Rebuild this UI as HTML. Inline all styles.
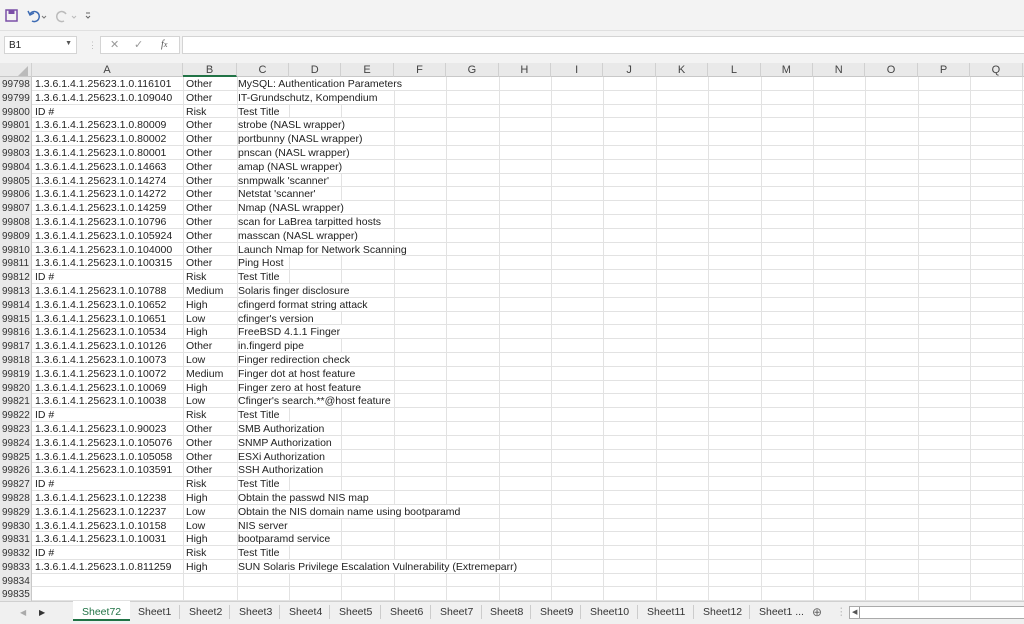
<!DOCTYPE html>
<html><head><meta charset="utf-8"><style>
*{margin:0;padding:0;box-sizing:border-box}
body{width:1024px;height:624px;overflow:hidden;background:#fff;font-family:"Liberation Sans",Arial,sans-serif;position:relative;color:#222}
.tb{position:absolute;left:0;top:0;width:1024px;height:31px;background:#f3f3f3;border-bottom:1px solid #e0e0e0}
.fb{position:absolute;left:0;top:31px;width:1024px;height:32px;background:#f3f3f3}
.nb{position:absolute;left:4px;top:36px;width:73px;height:18px;background:#fff;border:1px solid #d4d4d4;font-size:10px;padding:3px 4px}
.fx{position:absolute;left:100px;top:36px;width:80px;height:18px;background:#fff;border:1px solid #d4d4d4;color:#999;font-size:11px}
.fi{position:absolute;left:182px;top:36px;width:842px;height:18px;background:#fff;border:1px solid #d4d4d4;border-right:none}
.hdr{position:absolute;left:0;top:63px;width:1024px;height:14px;background:#e9e9e9;border-bottom:1px solid #c8c8c8}
.ch{position:absolute;top:0;height:14px;font-size:11px;text-align:center;line-height:14px;color:#444;border-right:1px solid #d0d0d0}
.grid{position:absolute;left:0;top:77px;width:1024px;z-index:2}
.r{height:13.8px;border-bottom:1px solid #e2e2e2;position:relative;font-size:10.5px;line-height:14px;white-space:nowrap}
.r span{position:absolute;top:0;background:#fff;height:12.8px;padding-right:2px}
.r span.n{left:0;width:32px;background:#e9e9e9;height:13.8px;color:#333;font-size:10px;line-height:15px;padding-left:2px;border-right:1px solid #c8c8c8}
.a{left:35px}.b{left:186px}.c{left:238px}
.vl{position:absolute;top:77px;height:525px;width:1px;background:#e2e2e2;z-index:1}
.tabs{position:absolute;left:0;top:601px;width:1024px;height:23px;background:#f0f0f0;border-top:1px solid #d0d0d0;font-size:10.5px;z-index:3}
.tabs span{position:absolute;top:4px;color:#333}
.sep{position:absolute;top:3px;width:1px;height:14px;background:#ccc}
</style></head><body>
<div class="tb">
<svg width="120" height="30" style="position:absolute;left:0;top:0">
<rect x="6" y="10" width="11" height="11" fill="none" stroke="#7b4fa8" stroke-width="1.5"/><rect x="8.5" y="10" width="6" height="4" fill="#7b4fa8"/>
<path d="M30 14 a5 5 0 1 1 2 7" fill="none" stroke="#3d6bb3" stroke-width="1.5"/><path d="M28 11 l2 4 4 -2" fill="none" stroke="#3d6bb3" stroke-width="1.5"/>
<path d="M42 16 l2 2 2-2" fill="none" stroke="#777"/>
<path d="M66 14 a5 5 0 1 0 -2 7" fill="none" stroke="#bbb" stroke-width="1.5"/>
<path d="M72 16 l2 2 2-2" fill="none" stroke="#bbb"/>
<path d="M86 13 h4 M86 16 l2 2 2-2" stroke="#666" fill="none"/>
</svg></div>
<div class="fb"></div>
<div class="nb">B1<span style="position:absolute;right:4px;top:3px;font-size:7px;color:#555">▼</span></div>
<div style="position:absolute;left:88px;top:40px;color:#bbb;font-size:9px">⋮</div>
<div class="fx"><span style="position:absolute;left:9px;top:1px">✕</span><span style="position:absolute;left:33px;top:1px">✓</span><span style="position:absolute;left:60px;top:2px;font-style:italic;font-family:'Liberation Serif',serif;color:#555;font-size:10px">f<small>x</small></span></div>
<div class="fi"></div>
<div class="hdr">
<div class="ch" style="left:0;width:32px"><svg width="10" height="10" style="position:absolute;left:18px;top:3px"><path d="M10 0 V10 H0z" fill="#bbb"/></svg></div>
<div class="ch" style="left:32px;width:151px">A</div>
<div class="ch" style="left:183px;width:54px;border-bottom:2px solid #217346">B</div>
<div class="ch" style="left:237px;width:52px">C</div>
<div class="ch" style="left:289px;width:52.4px">D</div>
<div class="ch" style="left:341.4px;width:52.4px">E</div>
<div class="ch" style="left:393.8px;width:52.4px">F</div>
<div class="ch" style="left:446.2px;width:52.4px">G</div>
<div class="ch" style="left:498.6px;width:52.4px">H</div>
<div class="ch" style="left:551px;width:52.4px">I</div>
<div class="ch" style="left:603.4px;width:52.4px">J</div>
<div class="ch" style="left:655.8px;width:52.4px">K</div>
<div class="ch" style="left:708.2px;width:52.4px">L</div>
<div class="ch" style="left:760.6px;width:52.4px">M</div>
<div class="ch" style="left:813px;width:52.4px">N</div>
<div class="ch" style="left:865.4px;width:52.4px">O</div>
<div class="ch" style="left:917.8px;width:52.4px">P</div>
<div class="ch" style="left:970.2px;width:52.4px">Q</div>
</div>
<div class="vl" style="left:183px"></div><div class="vl" style="left:237px"></div><div class="vl" style="left:289px"></div><div class="vl" style="left:341px"></div><div class="vl" style="left:394px"></div><div class="vl" style="left:446px"></div><div class="vl" style="left:499px"></div><div class="vl" style="left:551px"></div><div class="vl" style="left:603px"></div><div class="vl" style="left:656px"></div><div class="vl" style="left:708px"></div><div class="vl" style="left:761px"></div><div class="vl" style="left:813px"></div><div class="vl" style="left:865px"></div><div class="vl" style="left:918px"></div><div class="vl" style="left:970px"></div><div class="vl" style="left:1022px"></div>
<div class="grid">
<div class="r"><span class="n">99798</span><span class="a">1.3.6.1.4.1.25623.1.0.116101</span><span class="b">Other</span><span class="c">MySQL: Authentication Parameters</span></div>
<div class="r"><span class="n">99799</span><span class="a">1.3.6.1.4.1.25623.1.0.109040</span><span class="b">Other</span><span class="c">IT-Grundschutz, Kompendium</span></div>
<div class="r"><span class="n">99800</span><span class="a">ID #</span><span class="b">Risk</span><span class="c">Test Title</span></div>
<div class="r"><span class="n">99801</span><span class="a">1.3.6.1.4.1.25623.1.0.80009</span><span class="b">Other</span><span class="c">strobe (NASL wrapper)</span></div>
<div class="r"><span class="n">99802</span><span class="a">1.3.6.1.4.1.25623.1.0.80002</span><span class="b">Other</span><span class="c">portbunny (NASL wrapper)</span></div>
<div class="r"><span class="n">99803</span><span class="a">1.3.6.1.4.1.25623.1.0.80001</span><span class="b">Other</span><span class="c">pnscan (NASL wrapper)</span></div>
<div class="r"><span class="n">99804</span><span class="a">1.3.6.1.4.1.25623.1.0.14663</span><span class="b">Other</span><span class="c">amap (NASL wrapper)</span></div>
<div class="r"><span class="n">99805</span><span class="a">1.3.6.1.4.1.25623.1.0.14274</span><span class="b">Other</span><span class="c">snmpwalk 'scanner'</span></div>
<div class="r"><span class="n">99806</span><span class="a">1.3.6.1.4.1.25623.1.0.14272</span><span class="b">Other</span><span class="c">Netstat 'scanner'</span></div>
<div class="r"><span class="n">99807</span><span class="a">1.3.6.1.4.1.25623.1.0.14259</span><span class="b">Other</span><span class="c">Nmap (NASL wrapper)</span></div>
<div class="r"><span class="n">99808</span><span class="a">1.3.6.1.4.1.25623.1.0.10796</span><span class="b">Other</span><span class="c">scan for LaBrea tarpitted hosts</span></div>
<div class="r"><span class="n">99809</span><span class="a">1.3.6.1.4.1.25623.1.0.105924</span><span class="b">Other</span><span class="c">masscan (NASL wrapper)</span></div>
<div class="r"><span class="n">99810</span><span class="a">1.3.6.1.4.1.25623.1.0.104000</span><span class="b">Other</span><span class="c">Launch Nmap for Network Scanning</span></div>
<div class="r"><span class="n">99811</span><span class="a">1.3.6.1.4.1.25623.1.0.100315</span><span class="b">Other</span><span class="c">Ping Host</span></div>
<div class="r"><span class="n">99812</span><span class="a">ID #</span><span class="b">Risk</span><span class="c">Test Title</span></div>
<div class="r"><span class="n">99813</span><span class="a">1.3.6.1.4.1.25623.1.0.10788</span><span class="b">Medium</span><span class="c">Solaris finger disclosure</span></div>
<div class="r"><span class="n">99814</span><span class="a">1.3.6.1.4.1.25623.1.0.10652</span><span class="b">High</span><span class="c">cfingerd format string attack</span></div>
<div class="r"><span class="n">99815</span><span class="a">1.3.6.1.4.1.25623.1.0.10651</span><span class="b">Low</span><span class="c">cfinger's version</span></div>
<div class="r"><span class="n">99816</span><span class="a">1.3.6.1.4.1.25623.1.0.10534</span><span class="b">High</span><span class="c">FreeBSD 4.1.1 Finger</span></div>
<div class="r"><span class="n">99817</span><span class="a">1.3.6.1.4.1.25623.1.0.10126</span><span class="b">Other</span><span class="c">in.fingerd pipe</span></div>
<div class="r"><span class="n">99818</span><span class="a">1.3.6.1.4.1.25623.1.0.10073</span><span class="b">Low</span><span class="c">Finger redirection check</span></div>
<div class="r"><span class="n">99819</span><span class="a">1.3.6.1.4.1.25623.1.0.10072</span><span class="b">Medium</span><span class="c">Finger dot at host feature</span></div>
<div class="r"><span class="n">99820</span><span class="a">1.3.6.1.4.1.25623.1.0.10069</span><span class="b">High</span><span class="c">Finger zero at host feature</span></div>
<div class="r"><span class="n">99821</span><span class="a">1.3.6.1.4.1.25623.1.0.10038</span><span class="b">Low</span><span class="c">Cfinger's search.**@host feature</span></div>
<div class="r"><span class="n">99822</span><span class="a">ID #</span><span class="b">Risk</span><span class="c">Test Title</span></div>
<div class="r"><span class="n">99823</span><span class="a">1.3.6.1.4.1.25623.1.0.90023</span><span class="b">Other</span><span class="c">SMB Authorization</span></div>
<div class="r"><span class="n">99824</span><span class="a">1.3.6.1.4.1.25623.1.0.105076</span><span class="b">Other</span><span class="c">SNMP Authorization</span></div>
<div class="r"><span class="n">99825</span><span class="a">1.3.6.1.4.1.25623.1.0.105058</span><span class="b">Other</span><span class="c">ESXi Authorization</span></div>
<div class="r"><span class="n">99826</span><span class="a">1.3.6.1.4.1.25623.1.0.103591</span><span class="b">Other</span><span class="c">SSH Authorization</span></div>
<div class="r"><span class="n">99827</span><span class="a">ID #</span><span class="b">Risk</span><span class="c">Test Title</span></div>
<div class="r"><span class="n">99828</span><span class="a">1.3.6.1.4.1.25623.1.0.12238</span><span class="b">High</span><span class="c">Obtain the passwd NIS map</span></div>
<div class="r"><span class="n">99829</span><span class="a">1.3.6.1.4.1.25623.1.0.12237</span><span class="b">Low</span><span class="c">Obtain the NIS domain name using bootparamd</span></div>
<div class="r"><span class="n">99830</span><span class="a">1.3.6.1.4.1.25623.1.0.10158</span><span class="b">Low</span><span class="c">NIS server</span></div>
<div class="r"><span class="n">99831</span><span class="a">1.3.6.1.4.1.25623.1.0.10031</span><span class="b">High</span><span class="c">bootparamd service</span></div>
<div class="r"><span class="n">99832</span><span class="a">ID #</span><span class="b">Risk</span><span class="c">Test Title</span></div>
<div class="r"><span class="n">99833</span><span class="a">1.3.6.1.4.1.25623.1.0.811259</span><span class="b">High</span><span class="c">SUN Solaris Privilege Escalation Vulnerability (Extremeparr)</span></div>
<div class="r"><span class="n">99834</span></div>
<div class="r"><span class="n">99835</span></div>
</div>
<div class="tabs">
<span style="left:20px;color:#aaa;font-size:8px;top:6px">◀</span><span style="left:39px;font-size:8px;top:6px">▶</span>
<div style="position:absolute;left:73px;top:-1px;width:57px;height:20px;background:#fff;border-bottom:2px solid #217346"></div>
<span style="left:82px;color:#217346">Sheet72</span>
<span style="left:138px">Sheet1</span><div class="sep" style="left:179px"></div>
<span style="left:189px">Sheet2</span><div class="sep" style="left:229px"></div>
<span style="left:239px">Sheet3</span><div class="sep" style="left:279px"></div>
<span style="left:289px">Sheet4</span><div class="sep" style="left:329px"></div>
<span style="left:339px">Sheet5</span><div class="sep" style="left:380px"></div>
<span style="left:390px">Sheet6</span><div class="sep" style="left:430px"></div>
<span style="left:440px">Sheet7</span><div class="sep" style="left:481px"></div>
<span style="left:490px">Sheet8</span><div class="sep" style="left:530px"></div>
<span style="left:540px">Sheet9</span><div class="sep" style="left:580px"></div>
<span style="left:590px">Sheet10</span><div class="sep" style="left:637px"></div>
<span style="left:647px">Sheet11</span><div class="sep" style="left:693px"></div>
<span style="left:703px">Sheet12</span><div class="sep" style="left:749px"></div>
<span style="left:759px">Sheet1 ...</span>
<span style="left:812px;top:3px;font-size:12px;color:#666">⊕</span>
<span style="left:836px;color:#bbb">⋮</span>
<div style="position:absolute;left:849px;top:4px;width:175px;height:13px;background:#fff;border:1px solid #aaa;border-right:none"><div style="position:absolute;left:2px;top:0;width:8px;height:11px;border-right:1px solid #999;font-size:7px;line-height:11px;color:#555">◀</div></div>
</div>
</body></html>
